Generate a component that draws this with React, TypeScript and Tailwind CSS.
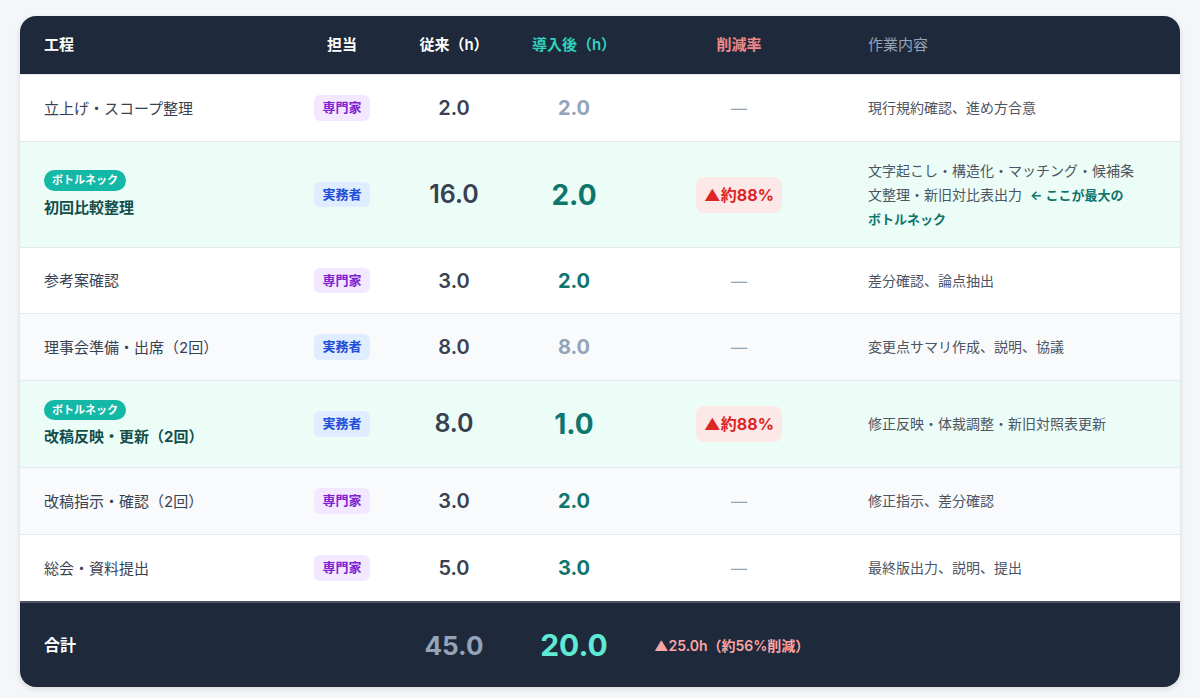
const rows = [
  { name: "立上げ・スコープ整理", role: "専門家", before: "2.0", after: "2.0", same: true, h: "h-[67px] bg-white", desc: "現行規約確認、進め方合意" },
  { name: "初回比較整理", role: "実務者", before: "16.0", after: "2.0", hot: true, h: "h-[106px] bg-[#ecfdf8]", desc: "文字起こし・構造化・マッチング・候補条文整理・新旧対比表出力", note: "← ここが最大のボトルネック" },
  { name: "参考案確認", role: "専門家", before: "3.0", after: "2.0", h: "h-[66px] bg-white", desc: "差分確認、論点抽出" },
  { name: "理事会準備・出席（2回）", role: "実務者", before: "8.0", after: "8.0", same: true, h: "h-[67px] bg-[#f8fafc]", desc: "変更点サマリ作成、説明、協議" },
  { name: "改稿反映・更新（2回）", role: "実務者", before: "8.0", after: "1.0", hot: true, h: "h-[87px] bg-[#ecfdf8]", desc: "修正反映・体裁調整・新旧対照表更新" },
  { name: "改稿指示・確認（2回）", role: "専門家", before: "3.0", after: "2.0", h: "h-[67px] bg-[#f8fafc]", desc: "修正指示、差分確認" },
  { name: "総会・資料提出", role: "専門家", before: "5.0", after: "3.0", h: "h-[67px] bg-white", desc: "最終版出力、説明、提出" },
];

const cols = "grid grid-cols-[270px_104px_120px_120px_210px_1fr] items-center";

function Role({ role }: { role: string }) {
  const pro = role === "専門家";
  return (
    <span className={`px-2 py-[3px] rounded-md text-[13px] font-semibold ${pro ? "bg-[#f3e8ff] text-[#7e22ce]" : "bg-[#e0ecff] text-[#1d4ed8]"}`}>
      {role}
    </span>
  );
}

export default function App() {
  return (
    <div className="w-[1200px] h-[698px] bg-[#f4f6f9] pt-4 px-5" style={{ fontFamily: "Inter, 'Noto Sans CJK JP', sans-serif" }}>
      <div className="rounded-2xl overflow-hidden shadow-[0_2px_6px_rgba(0,0,0,0.12)] bg-white">
        <div className={`${cols} h-[58px] bg-[#1e293b] text-[15px] font-semibold`}>
          <div className="pl-6 text-white">工程</div>
          <div className="text-center text-white">担当</div>
          <div className="text-center text-white">従来（h）</div>
          <div className="text-center text-[#2dd4bf]">導入後（h）</div>
          <div className="text-center text-[#f08a8a]">削減率</div>
          <div className="px-6 text-[#94a3b8] font-normal">作業内容</div>
        </div>
        {rows.map((r, i) => (
          <div key={i} className={`${cols} border-t border-[#e5e9ef] ${r.h}`}>
            <div className="pl-6">
              {r.hot ? (
                <div className="flex flex-col items-start gap-[6px]">
                  <span className="bg-[#14b8a6] text-white text-[11px] font-semibold px-2 py-[2px] rounded-full">ボトルネック</span>
                  <span className="text-[15px] font-bold text-[#134e4a]">{r.name}</span>
                </div>
              ) : (
                <span className="text-[15px] text-[#374151]">{r.name}</span>
              )}
            </div>
            <div className="flex justify-center"><Role role={r.role} /></div>
            <div className={`text-center font-semibold text-[#374151] ${r.hot ? "text-[25px]" : "text-[20px]"}`}>{r.before}</div>
            <div className={`text-center font-bold ${r.same ? "text-[#94a3b8] text-[20px]" : r.hot ? "text-[#0f766e] text-[28px]" : "text-[#0f766e] text-[20px]"}`}>{r.after}</div>
            <div className="flex justify-center">
              {r.hot ? (
                <span className="bg-[#fde8e8] text-[#dc2626] font-bold text-[16px] px-2 py-[6px] rounded-lg">▲約88%</span>
              ) : (
                <span className="text-[#94a3b8]">—</span>
              )}
            </div>
            <div className="pl-6 pr-[44px] text-[14px] text-[#4b5563] leading-[24px]">
              {r.desc}
              {r.note && <span className="ml-2 text-[13px] font-bold text-[#0f766e]">{r.note}</span>}
            </div>
          </div>
        ))}
        <div className={`${cols} h-[86px] bg-[#1e293b] border-t-2 border-[#4b5563]`}>
          <div className="pl-6 text-white font-bold text-[16px]">合計</div>
          <div></div>
          <div className="text-center text-[#94a3b8] text-[26px] font-bold">45.0</div>
          <div className="text-center text-[#5eead4] text-[30px] font-bold">20.0</div>
          <div className="col-span-2 pl-5 text-[#fca5a5] text-[14px] font-semibold">▲25.0h（約56%削減）</div>
        </div>
      </div>
    </div>
  );
}
